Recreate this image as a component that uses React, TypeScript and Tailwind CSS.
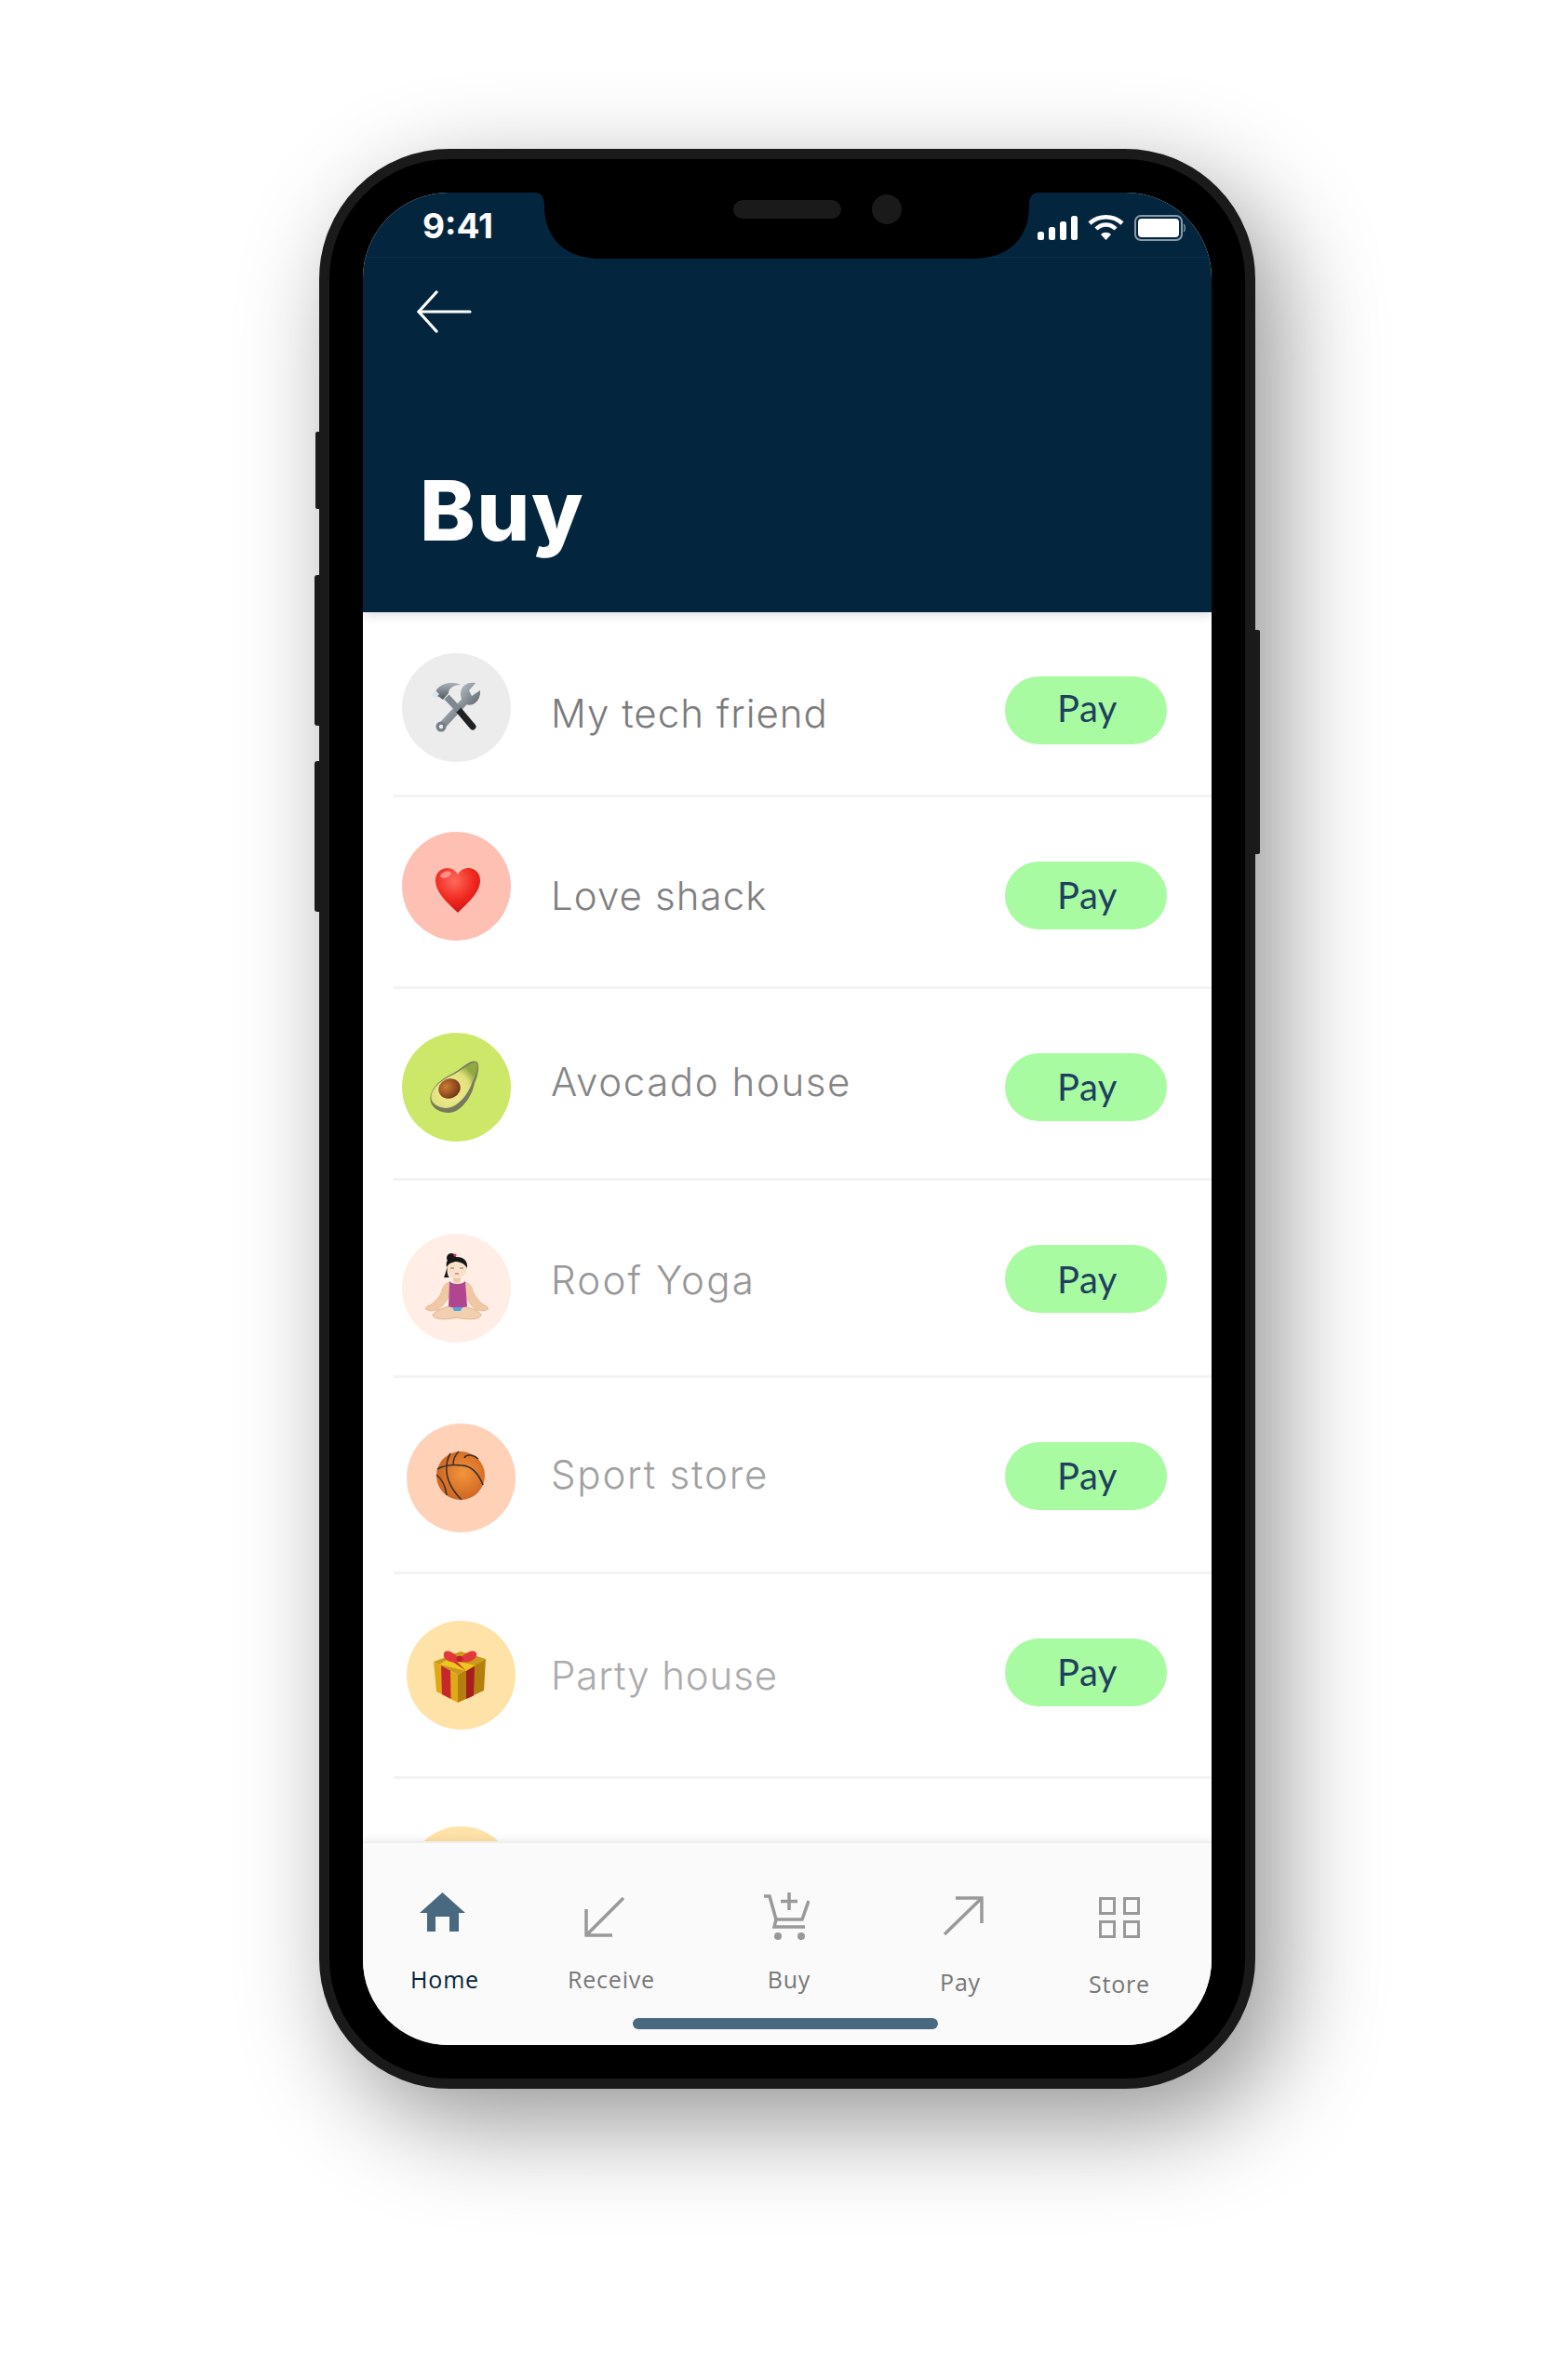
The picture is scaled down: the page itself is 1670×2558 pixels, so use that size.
import type { ReactNode } from "react";

function Tools() {
  return (
    <svg viewBox="0 0 117 117" className="w-full h-full">
      <defs>
        <linearGradient id="metal" x1="0" y1="0" x2="1" y2="1">
          <stop offset="0" stopColor="#b9c0c7" />
          <stop offset="1" stopColor="#5b636b" />
        </linearGradient>
        <linearGradient id="head" x1="0" y1="0" x2="0" y2="1">
          <stop offset="0" stopColor="#aab3bb" />
          <stop offset="1" stopColor="#4f5760" />
        </linearGradient>
      </defs>
      {/* wrench */}
      <path d="M42 79 L69 50" stroke="url(#metal)" strokeWidth="8" strokeLinecap="round" />
      <circle cx="42" cy="79" r="5.5" fill="#767f88" />
      <circle cx="42" cy="79" r="2.2" fill="#eeeeee" />
      <path d="M64 49 C60 38 68 30 79 32 L72 40 L75 46 L84 40 C85 50 77 58 69 55 Z" fill="url(#metal)" />
      {/* hammer */}
      <path d="M60 60 L76 79" stroke="#1f2225" strokeWidth="7" strokeLinecap="round" />
      <path d="M48 47 L61 61" stroke="#7f8790" strokeWidth="7" />
      <path d="M34 45 L38 38 C45 31 55 30 63 34 C55 34 50 38 50 43 L44 50 L40 47 Z" fill="url(#head)" />
      <path d="M32 45 L36 40 L40 44 L36 49 Z" fill="#d7e6ef" />
    </svg>
  );
}

function Heart() {
  return (
    <svg viewBox="0 0 117 117" className="w-full h-full">
      <defs>
        <radialGradient id="heart" cx="0.42" cy="0.28" r="0.8">
          <stop offset="0" stopColor="#ff6a5e" />
          <stop offset="0.55" stopColor="#f0281f" />
          <stop offset="1" stopColor="#c30f0a" />
        </radialGradient>
      </defs>
      <path d="M60 87 C50 77 36 66 36 52 C36 44 42 39 49 39 C54 39 58 42 60 46 C62 42 66 39 71 39 C78 39 84 44 84 52 C84 66 70 77 60 87 Z" fill="url(#heart)" />
      <ellipse cx="47" cy="46" rx="6" ry="3.2" fill="#ffb0a6" opacity="0.7" transform="rotate(-20 47 46)" />
    </svg>
  );
}

function Avocado() {
  return (
    <svg viewBox="0 0 117 117" className="w-full h-full">
      <defs>
        <radialGradient id="pit" cx="0.4" cy="0.35" r="0.7">
          <stop offset="0" stopColor="#cf7a34" />
          <stop offset="1" stopColor="#6e3412" />
        </radialGradient>
        <radialGradient id="flesh" cx="0.4" cy="0.62" r="0.62">
          <stop offset="0" stopColor="#f6ef96" />
          <stop offset="0.7" stopColor="#dfe07a" />
          <stop offset="1" stopColor="#8fa83f" />
        </radialGradient>
      </defs>
      <path d="M80 31 C84 33 82 46 78 54 C75 70 62 87 49 86 C36 85 28 77 31 66 C35 54 46 48 56 43 C66 37 74 28 80 31 Z" fill="#77795f" />
      <path d="M80 32 C83 35 80 45 76 52 C72 65 60 81 47 81 C36 80 29 74 32 65 C36 55 46 49 57 44 C66 39 75 30 80 32 Z" fill="url(#flesh)" />
      <ellipse cx="51" cy="60" rx="12" ry="10.5" fill="url(#pit)" transform="rotate(-25 51 60)" />
    </svg>
  );
}

function Yoga() {
  return (
    <svg viewBox="0 0 117 117" className="w-full h-full">
      <path d="M52 52 C45 53 44 58 42 64 C38 71 33 76 27 78 L25 81 L30 83 L38 82 C44 78 49 71 52 64 Z" fill="#f0c9a4" stroke="#d8a981" strokeWidth="0.6" />
      <path d="M67 52 C74 53 75 58 77 64 C81 71 86 76 91 78 L93 81 L88 83 L80 82 C74 78 70 71 67 64 Z" fill="#f0c9a4" stroke="#d8a981" strokeWidth="0.6" />
      <path d="M59 76 C48 78 35 83 33 87 C33 92 46 93 59 90 C72 93 85 92 85 87 C83 83 70 78 59 76 Z" fill="#f2cfae" stroke="#d8a981" strokeWidth="0.8" />
      <path d="M51 51 C54 55 65 55 68 51 L70 78 C64 80 55 80 50 78 Z" fill="#b2458f" />
      <path d="M54 79 H65 L63 83 H56 Z" fill="#4da6d8" />
      <path d="M55 42 H63 V50 C63 54 55 54 55 50 Z" fill="#f0c9a4" />
      <ellipse cx="59" cy="36" rx="11" ry="12" fill="#f8e0cb" />
      <path d="M48 36 C46 27 53 25 59 25 C66 25 71 29 70 37 C67 31 61 30 57 30 C53 31 50 32 48 36 Z" fill="#161616" />
      <circle cx="53" cy="26" r="5" fill="#161616" />
      <path d="M49 36 C48 41 49 45 51 47 L45 47 C47 43 47 39 49 36 Z" fill="#161616" />
      <circle cx="57" cy="23" r="1.6" fill="#c23a6e" />
      <path d="M52 37 H56 M62 37 H66" stroke="#7a5a44" strokeWidth="0.9" />
      <path d="M57 43 H61" stroke="#c56a66" strokeWidth="1.2" />
    </svg>
  );
}

function Basketball() {
  return (
    <svg viewBox="0 0 117 117" className="w-full h-full">
      <defs>
        <radialGradient id="ball" cx="0.55" cy="0.45" r="0.65">
          <stop offset="0" stopColor="#f2963c" />
          <stop offset="1" stopColor="#c85c1c" />
        </radialGradient>
      </defs>
      <circle cx="58" cy="56" r="26" fill="url(#ball)" />
      <g fill="none" stroke="#35302d" strokeWidth="1.5">
        <path d="M33 49 C42 44 50 44 59 45" />
        <path d="M59 45 C70 45 78 55 82 66" />
        <path d="M47 32 C41 42 41 58 50 71 C53 76 56 79 59 82" />
        <path d="M56 30 C51 35 50 41 50 44" />
        <path d="M62 37 C64 33 71 33 77 38" />
        <path d="M32 55 C38 60 42 68 43 77" />
      </g>
    </svg>
  );
}

function Gift() {
  return (
    <svg viewBox="0 0 117 117" className="w-full h-full">
      <path d="M29 44 L58 33 L85 41 L55 58 Z" fill="#c99a1c" />
      <path d="M29 44 L55 58 L55 88 L32 76 Z" fill="#e0a818" />
      <path d="M85 41 L55 58 L55 88 L83 75 Z" fill="#b57f0e" />
      <path d="M37 48 L47 53.5 L47.5 84 L38 79 Z" fill="#c8272a" />
      <path d="M64 53 L73 48 L72 80.5 L64 84 Z" fill="#a81d20" />
      <path d="M35 47 L45 41 L74 48 L64 54 Z" fill="#efc51f" />
      <path d="M45 41 L55 45 L64 54 L54 47 Z" fill="#c8272a" />
      <path d="M57 41 C50 33 42 30 40 35 C38 43 49 46 57 44 C65 46 77 42 75 35 C73 30 64 33 57 41 Z" fill="#e2383b" />
      <ellipse cx="57" cy="41" rx="3.5" ry="3.2" fill="#b92326" />
    </svg>
  );
}

type Row = {
  name: string;
  rowH: string;
  avatarBox: string;
  textBox: string;
  payBox: string;
  icon: ReactNode;
};

const rows: Row[] = [
  { name: "My tech friend", rowH: "h-[199px]", avatarBox: "ml-[9px] mt-[44px] bg-[#ececec]", textBox: "ml-[43px] mt-[84px] text-[#7b7b7b] tracking-[1px]", payBox: "mt-[69px] pb-[5px]", icon: <Tools /> },
  { name: "Love shack", rowH: "h-[206px]", avatarBox: "ml-[9px] mt-[37px] bg-[#ffc0b4]", textBox: "ml-[43px] mt-[81px] text-[#7f7f7f] tracking-[1.1px]", payBox: "mt-[69px] pb-[2px]", icon: <Heart /> },
  { name: "Avocado house", rowH: "h-[206px]", avatarBox: "ml-[9px] mt-[47px] bg-[#cde869]", textBox: "ml-[43px] mt-[75px] text-[#858585] tracking-[1.6px]", payBox: "mt-[69px] pb-[2px]", icon: <Avocado /> },
  { name: "Roof Yoga", rowH: "h-[212px]", avatarBox: "ml-[9px] mt-[57px] bg-[#ffede6]", textBox: "ml-[43px] mt-[82px] text-[#979797] tracking-[2.2px]", payBox: "mt-[69px]", icon: <Yoga /> },
  { name: "Sport store", rowH: "h-[211px]", avatarBox: "ml-[14px] mt-[49px] bg-[#ffd2b8]", textBox: "ml-[38px] mt-[79px] text-[#a0a0a0] tracking-[1.8px]", payBox: "mt-[69px] pb-[2px]", icon: <Basketball /> },
  { name: "Party house", rowH: "h-[220px]", avatarBox: "ml-[14px] mt-[50px] bg-[#ffe2a8]", textBox: "ml-[38px] mt-[84px] text-[#ababab] tracking-[0.9px]", payBox: "mt-[69px] pb-[2px]", icon: <Gift /> },
];

function ListRow({ row }: { row: Row }) {
  return (
    <div className={`ml-[33px] flex items-start border-b-[3px] border-[#f3f3f3] shrink-0 ${row.rowH}`}>
      <div className={`w-[117px] h-[117px] rounded-full shrink-0 ${row.avatarBox}`}>{row.icon}</div>
      <div className={`font-['Inter',sans-serif] font-[350] text-[42px] leading-[50px] ${row.textBox}`}>{row.name}</div>
      <div className={`ml-auto mr-[48px] w-[174px] h-[73px] rounded-full bg-[#a8fba0] flex items-center justify-center pl-[3px] font-['Lato',sans-serif] text-[40px] tracking-[0.5px] text-[#1f3f5f] ${row.payBox}`}>
        Pay
      </div>
    </div>
  );
}

function StatusIcons() {
  return (
    <div className="ml-auto mr-[28px] mt-[24px] flex items-start gap-[11px]">
      <svg width="43" height="26" viewBox="0 0 43 26" fill="#fff" className="mt-[1px]">
        <rect x="0" y="17" width="7" height="9" rx="2.5" />
        <rect x="12" y="12" width="7" height="14" rx="2.5" />
        <rect x="24" y="6" width="7" height="20" rx="2.5" />
        <rect x="36" y="0" width="7" height="26" rx="2.5" />
      </svg>
      <svg width="39" height="27" viewBox="0 0 39 27" fill="none" stroke="#fff" strokeWidth="4.5">
        <path d="M2 9 C12 0 27 0 37 9" />
        <path d="M9 15 C15 9 24 9 30 15" />
        <path d="M14 21 L19.5 27 L25 21 C22 18 17 18 14 21 Z" fill="#fff" stroke="none" />
      </svg>
      <svg width="55" height="28" viewBox="0 0 55 28" fill="none">
        <rect x="1" y="1" width="50" height="26" rx="6" stroke="#8a9aa8" strokeWidth="2" />
        <rect x="4" y="4" width="44" height="20" rx="4" fill="#fff" />
        <path d="M53 10 C54.5 11 54.5 17 53 18" stroke="#8a9aa8" strokeWidth="1.5" />
      </svg>
    </div>
  );
}

function Notch() {
  return (
    <svg width="541" height="71" viewBox="0 0 541 71" className="absolute top-0 left-[185px] z-10">
      <path d="M0 0 H541 C534 0 531 5 531 14 C531 46 512 71 470 71 H71 C29 71 10 46 10 14 C10 5 7 0 0 0 Z" fill="#000" />
    </svg>
  );
}

type NavItem = {
  label: string;
  width: string;
  labelClass: string;
  icon: ReactNode;
};

const navItems: NavItem[] = [
  {
    label: "Home",
    width: "w-[176px]",
    labelClass: "mt-[34px] text-[#05243b]",
    icon: (
      <svg width="49" height="42" viewBox="0 0 49 42" className="mt-[53px] ml-[-6px]">
        <path d="M24.5 0 L49 22 H42 V42 H32 V26 H17 V42 H8 V22 H0 Z" fill="#48697f" />
      </svg>
    ),
  },
  {
    label: "Receive",
    width: "w-[182px]",
    labelClass: "mt-[28px] text-[#777]",
    icon: (
      <svg width="43" height="43" viewBox="0 0 43 43" fill="none" stroke="#999" strokeWidth="3.5" className="mt-[58px] ml-[-16px]">
        <path d="M42 1 L2 41" />
        <path d="M2 13 V41 H30" />
      </svg>
    ),
  },
  {
    label: "Buy",
    width: "w-[200px]",
    labelClass: "mt-[24px] text-[#777]",
    icon: (
      <svg width="49" height="52" viewBox="0 0 49 52" fill="none" stroke="#999" strokeWidth="3.5" className="mt-[53px] ml-[-6px]">
        <path d="M0 4 H6 L13 29 H41 L48 9" />
        <path d="M13 29 L11 37 H44" />
        <path d="M27 0 V19 M18 9.5 H36" />
        <circle cx="15" cy="47" r="4" fill="#999" stroke="none" />
        <circle cx="40" cy="47" r="4" fill="#999" stroke="none" />
      </svg>
    ),
  },
  {
    label: "Pay",
    width: "w-[168px]",
    labelClass: "mt-[33px] text-[#777]",
    icon: (
      <svg width="43" height="42" viewBox="0 0 43 42" fill="none" stroke="#999" strokeWidth="3.5" className="mt-[57px] ml-[6px]">
        <path d="M1 41 L41 2" />
        <path d="M13 2 H41 V29" />
      </svg>
    ),
  },
  {
    label: "Store",
    width: "w-[174px]",
    labelClass: "mt-[32px] text-[#777]",
    icon: (
      <svg width="44" height="44" viewBox="0 0 44 44" fill="none" stroke="#999" strokeWidth="3" className="mt-[58px]">
        <rect x="1.5" y="1.5" width="15" height="16" />
        <rect x="27.5" y="1.5" width="15" height="16" />
        <rect x="1.5" y="26.5" width="15" height="16" />
        <rect x="27.5" y="26.5" width="15" height="16" />
      </svg>
    ),
  },
];

export default function App() {
  return (
    <div className="w-[1670px] h-[2558px] bg-white pl-[343px] pt-[160px] overflow-hidden">
      <div className="relative w-[1006px] h-[2085px] rounded-[140px] bg-black border-[11px] border-[#1a1a1a] p-[36px] shadow-[26px_36px_110px_rgba(0,0,0,0.42)]">
        {/* side buttons */}
        <div className="absolute left-[-15px] top-[293px] w-[4px] h-[83px] bg-[#1a1a1a] rounded-l-[2px]" />
        <div className="absolute left-[-16px] top-[447px] w-[5px] h-[162px] bg-[#1a1a1a] rounded-l-[3px]" />
        <div className="absolute left-[-16px] top-[647px] w-[5px] h-[162px] bg-[#1a1a1a] rounded-l-[3px]" />
        <div className="absolute right-[-16px] top-[506px] w-[5px] h-[241px] bg-[#1a1a1a] rounded-r-[2px]" />

        <div className="relative w-[912px] h-[1991px] rounded-[92px] overflow-hidden bg-white flex flex-col">
          <Notch />
          <div className="absolute top-[8px] left-[398px] w-[116px] h-[20px] rounded-full bg-[#1a1a1a] z-20" />
          <div className="absolute top-[2px] left-[547px] w-[32px] h-[32px] rounded-full bg-[#1a1a1a] z-20" />

          <div className="h-[451px] shrink-0 bg-[#03263e] shadow-[0_4px_10px_rgba(0,0,0,0.12)] relative z-0">
            <div className="h-[70px] flex items-start border-b border-[#0b3049]">
              <div className="ml-[64px] mt-[14px] font-['Inter',sans-serif] font-bold text-[37px] leading-[44px] text-white">9:41</div>
              <StatusIcons />
            </div>
            <svg width="60" height="46" viewBox="0 0 60 46" fill="none" stroke="#fff" strokeWidth="3.2" strokeLinecap="round" strokeLinejoin="round" className="ml-[57px] mt-[35px]">
              <path d="M58 23 H3" />
              <path d="M22 2 L3 23 L22 44" />
            </svg>
            <div className="ml-[61px] mt-[136px] font-['Inter',sans-serif] font-extrabold text-[90px] leading-[110px] tracking-[1.5px] text-white">Buy</div>
          </div>

          <div className="flex-1 min-h-0 overflow-hidden flex flex-col">
            {rows.map((row) => (
              <ListRow key={row.name} row={row} />
            ))}
            <div className="ml-[47px] mt-[51px] w-[117px] h-[117px] rounded-full bg-[#ffe2a8] shrink-0" />
          </div>

          <div className="h-[219px] shrink-0 bg-[#fafafa] border-t-[2px] border-[#efefef] shadow-[0_-3px_8px_rgba(0,0,0,0.06)] relative">
            <div className="h-[188px] flex items-start">
              {navItems.map((item) => (
                <div key={item.label} className={`flex flex-col items-center ${item.width}`}>
                  {item.icon}
                  <div className={`font-['Open_Sans',sans-serif] text-[25px] leading-[34px] tracking-[0.8px] ${item.labelClass}`}>{item.label}</div>
                </div>
              ))}
            </div>
            <div className="ml-[290px] w-[328px] h-[12px] rounded-full bg-[#48697f]" />
          </div>
        </div>
      </div>
    </div>
  );
}
